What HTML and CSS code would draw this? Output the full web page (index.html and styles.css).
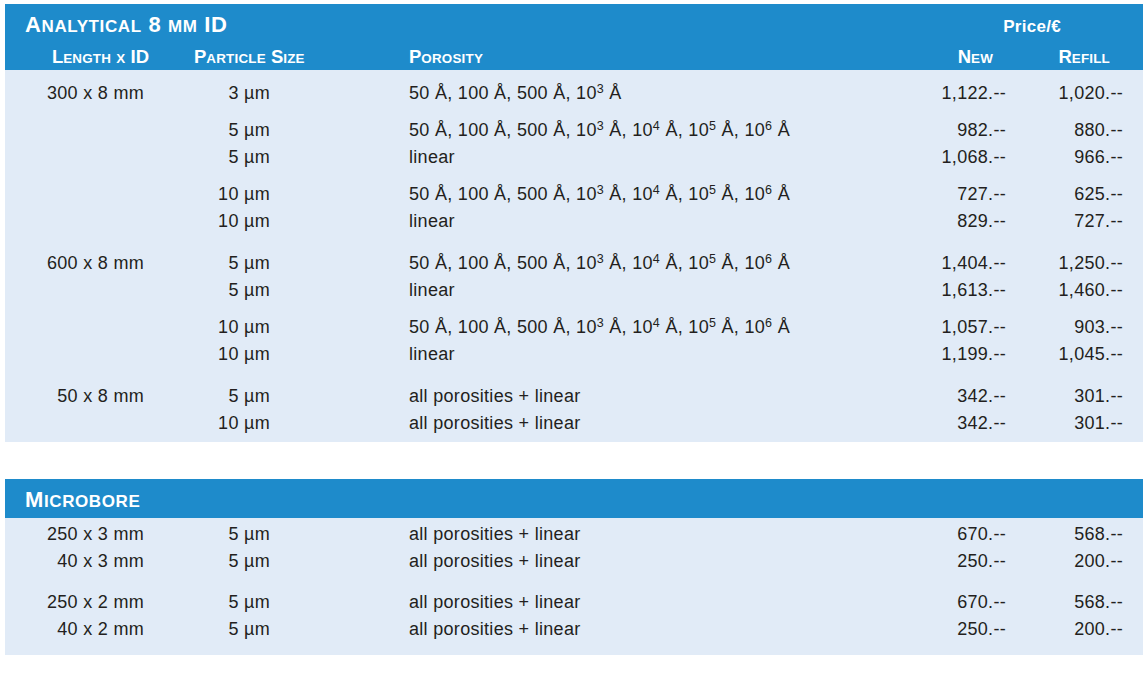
FILE: index.html
```html
<!DOCTYPE html>
<html lang="en">
<head>
<meta charset="utf-8">
<title>Price list</title>
<link rel="stylesheet" href="styles.css">
</head>
<body>
<div class="page">
  <section class="block">
    <div class="head">
      <div class="title-row">
        <h2 class="title">A<span class="sc">NALYTICAL</span> 8 <span class="sc">MM</span> ID</h2>
        <div class="price-label">Price/€</div>
      </div>
      <div class="grid colhead">
        <div class="c1 hl">L<span class="hsc">ENGTH</span> <span class="hsc">X</span> ID</div>
        <div class="c2 hl">P<span class="hsc">ARTICLE</span> S<span class="hsc">IZE</span></div>
        <div class="c3 hl">P<span class="hsc">OROSITY</span></div>
        <div class="c4 hl">N<span class="hsc">EW</span></div>
        <div class="c5 hl">R<span class="hsc">EFILL</span></div>
      </div>
    </div>
    <div class="body body-a">
      <div class="grid row"><div class="c1">300 x 8 mm</div><div class="c2">3 µm</div><div class="c3">50 Å, 100 Å, 500 Å, 10<sup>3</sup> Å</div><div class="c4">1,122.--</div><div class="c5">1,020.--</div></div>
      <div class="grid row gap"><div class="c1"></div><div class="c2">5 µm</div><div class="c3">50 Å, 100 Å, 500 Å, 10<sup>3</sup> Å, 10<sup>4</sup> Å, 10<sup>5</sup> Å, 10<sup>6</sup> Å</div><div class="c4">982.--</div><div class="c5">880.--</div></div>
      <div class="grid row"><div class="c1"></div><div class="c2">5 µm</div><div class="c3">linear</div><div class="c4">1,068.--</div><div class="c5">966.--</div></div>
      <div class="grid row gap"><div class="c1"></div><div class="c2">10 µm</div><div class="c3">50 Å, 100 Å, 500 Å, 10<sup>3</sup> Å, 10<sup>4</sup> Å, 10<sup>5</sup> Å, 10<sup>6</sup> Å</div><div class="c4">727.--</div><div class="c5">625.--</div></div>
      <div class="grid row"><div class="c1"></div><div class="c2">10 µm</div><div class="c3">linear</div><div class="c4">829.--</div><div class="c5">727.--</div></div>
      <div class="grid row gap-lg"><div class="c1">600 x 8 mm</div><div class="c2">5 µm</div><div class="c3">50 Å, 100 Å, 500 Å, 10<sup>3</sup> Å, 10<sup>4</sup> Å, 10<sup>5</sup> Å, 10<sup>6</sup> Å</div><div class="c4">1,404.--</div><div class="c5">1,250.--</div></div>
      <div class="grid row"><div class="c1"></div><div class="c2">5 µm</div><div class="c3">linear</div><div class="c4">1,613.--</div><div class="c5">1,460.--</div></div>
      <div class="grid row gap"><div class="c1"></div><div class="c2">10 µm</div><div class="c3">50 Å, 100 Å, 500 Å, 10<sup>3</sup> Å, 10<sup>4</sup> Å, 10<sup>5</sup> Å, 10<sup>6</sup> Å</div><div class="c4">1,057.--</div><div class="c5">903.--</div></div>
      <div class="grid row"><div class="c1"></div><div class="c2">10 µm</div><div class="c3">linear</div><div class="c4">1,199.--</div><div class="c5">1,045.--</div></div>
      <div class="grid row gap-lg"><div class="c1">50 x 8 mm</div><div class="c2">5 µm</div><div class="c3">all porosities + linear</div><div class="c4">342.--</div><div class="c5">301.--</div></div>
      <div class="grid row"><div class="c1"></div><div class="c2">10 µm</div><div class="c3">all porosities + linear</div><div class="c4">342.--</div><div class="c5">301.--</div></div>
    </div>
  </section>

  <section class="block block-micro">
    <div class="head">
      <div class="title-row">
        <h2 class="title">M<span class="sc">ICROBORE</span></h2>
      </div>
    </div>
    <div class="body body-b">
      <div class="grid row"><div class="c1">250 x 3 mm</div><div class="c2">5 µm</div><div class="c3">all porosities + linear</div><div class="c4">670.--</div><div class="c5">568.--</div></div>
      <div class="grid row"><div class="c1">40 x 3 mm</div><div class="c2">5 µm</div><div class="c3">all porosities + linear</div><div class="c4">250.--</div><div class="c5">200.--</div></div>
      <div class="grid row gap-m"><div class="c1">250 x 2 mm</div><div class="c2">5 µm</div><div class="c3">all porosities + linear</div><div class="c4">670.--</div><div class="c5">568.--</div></div>
      <div class="grid row"><div class="c1">40 x 2 mm</div><div class="c2">5 µm</div><div class="c3">all porosities + linear</div><div class="c4">250.--</div><div class="c5">200.--</div></div>
    </div>
  </section>
</div>
</body>
</html>
```

FILE: styles.css
```css
* { box-sizing: border-box; margin: 0; padding: 0; }

html, body { background: #ffffff; }

body {
  font-family: "Liberation Sans", Arial, sans-serif;
  color: #231f20;
}

.page {
  width: 1138px;
  margin: 4px 0 0 5px;
}

.head {
  background: #1e8bcb;
  color: #ffffff;
  font-weight: bold;
}

.title-row {
  display: flex;
  align-items: baseline;
  justify-content: space-between;
  padding: 7px 82px 0 20px;
  height: 34px;
}

.title {
  font-size: 22px;
  line-height: 28px;
  font-weight: bold;
  letter-spacing: 0.6px;
}

.sc {
  font-size: 17px;
  line-height: 0;
}

.price-label {
  font-size: 17px;
  line-height: 28px;
  letter-spacing: 0.3px;
}

.block-micro { margin-top: 37px; }
.block-micro .title-row { height: 39px; }

.grid {
  display: grid;
  grid-template-columns: 140px 125px 616px 120px 117px;
  padding-right: 20px;
}

.colhead {
  padding-top: 6px;
  padding-bottom: 0;
  line-height: 26px;
  font-size: 18.5px;
  white-space: nowrap;
}

.hsc {
  font-size: 13.4px;
  line-height: 0;
  letter-spacing: 0.2px;
}

.colhead .c1 { text-align: right; margin-right: -4px; }
.colhead .c2 { padding-left: 49px; }
.colhead .c3 { padding-left: 139px; }
.colhead .c4 { text-align: right; padding-right: 13px; }
.colhead .c5 { text-align: right; padding-right: 13px; }

.body {
  background: #e1ebf7;
  font-size: 18px;
  letter-spacing: 0.3px;
}

.body-a { padding: 10px 0 5px; }
.body-b { padding: 3px 0 12px; }

.row {
  line-height: 27px;
  white-space: nowrap;
}

.row .c1 { text-align: right; padding-right: 1px; }
.row .c2 { text-align: right; }
.row .c3 { padding-left: 139px; }
.row .c4 { text-align: right; }
.row .c5 { text-align: right; }

.gap { margin-top: 10px; }
.gap-lg { margin-top: 15px; }
.gap-m { margin-top: 14px; }

sup {
  font-size: 12.5px;
  line-height: 0;
  vertical-align: 6px;
}
```
